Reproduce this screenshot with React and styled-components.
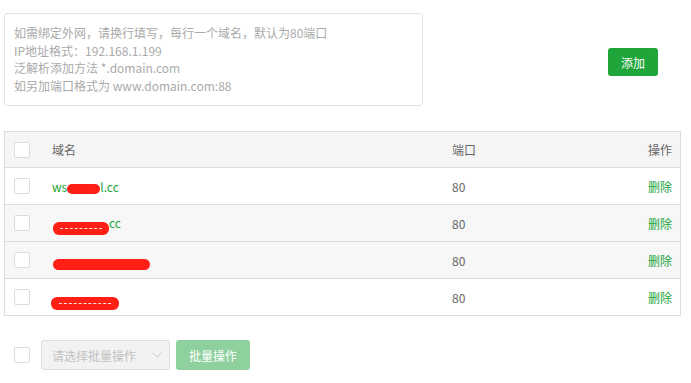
import React from "react";
import styled, { createGlobalStyle } from "styled-components";
import { ChevronDown } from "lucide-react";

const GlobalStyle = createGlobalStyle`
  body {
    margin: 0;
    background: #fff;
    font-family: "Noto Sans CJK SC", "Liberation Sans", sans-serif;
    font-size: 12px;
    color: #666;
  }
`;

const Page = styled.div`
  padding: 13px 10px 0 4px;
`;

const TopRow = styled.div`
  display: flex;
  align-items: center;
`;

const Textarea = styled.div`
  width: 419px;
  height: 93px;
  box-sizing: border-box;
  border: 1px solid #e2e2e2;
  border-radius: 3px;
  padding: 10px 9px;
  color: #aaa;
  font-size: 12px;
  line-height: 17.5px;
`;

const Button = styled.button`
  height: 28px;
  padding: 0 13px;
  border: none;
  border-radius: 3px;
  background: ${({ disabled }) => (disabled ? "#8fd19e" : "#20a53a")};
  color: #fff;
  font-family: inherit;
  font-size: 12px;
  cursor: pointer;
`;

const AddButton = styled(Button)`
  width: 50px;
  padding: 0;
  margin: 5px 23px 0 auto;
`;

const Table = styled.div`
  margin-top: 25px;
  border: 1px solid #ddd;
`;

const Row = styled.div`
  display: grid;
  grid-template-columns: 47px 400px 1fr 120px;
  align-items: center;
  height: ${({ $head }) => ($head ? "35px" : "36px")};
  background: ${({ $head, $shade }) => ($head ? "#f5f5f5" : $shade ? "#f7f7f7" : "#fff")};
  & + & {
    border-top: 1px solid #ddd;
  }
`;

const Check = styled.span`
  display: block;
  width: 14px;
  height: 14px;
  border: 1px solid #dcdcdc;
  border-radius: 2px;
  background: #fff;
  margin-left: 9px;
`;

const Cell = styled.div`
  text-align: ${({ $right }) => ($right ? "right" : "left")};
  padding-right: ${({ $right }) => ($right ? "8px" : "0")};
  color: ${({ $green }) => ($green ? "#20a53a" : "#666")};
`;

const Domain = styled.span`
  color: #20a53a;
  white-space: nowrap;
`;

const Redact = styled.span`
  display: inline-block;
  position: relative;
  vertical-align: middle;
  background: #ff1f14;
  border-radius: 6px;
  &::after {
    content: "";
    display: ${({ $dash }) => ($dash ? "block" : "none")};
    position: absolute;
    left: 12%;
    right: 12%;
    top: 50%;
    border-top: 1px dashed rgba(255, 255, 255, 0.85);
  }
`;

const Footer = styled.div`
  display: flex;
  align-items: center;
  gap: 6px;
  margin-top: 24px;
  padding-left: 1px;
`;

const FooterCheck = styled(Check)`
  margin: 0 5px 0 9px;
`;

const Select = styled.div`
  width: 129px;
  height: 30px;
  box-sizing: border-box;
  border: 1px solid #ddd;
  border-radius: 3px;
  background: #f2f2f2;
  color: #c2c2c2;
  display: flex;
  align-items: center;
  justify-content: space-between;
  padding: 0 4px 0 10px;
  font-size: 12px;
`;

const BatchButton = styled(Button)`
  height: 30px;
  width: 74px;
  padding: 0;
`;

const rows = [
  { pre: "ws", post: "l.cc", blob: { width: 33, height: 10, top: 1 } },
  { pre: "", post: "cc", shade: true, dash: true, blob: { width: 56, height: 13, top: 3, marginLeft: 1 } },
  { pre: "", post: "", shade: true, blob: { width: 97, height: 11, top: 2, marginLeft: 1 } },
  { pre: "", post: "", dash: true, blob: { width: 68, height: 13, top: 4, marginLeft: -1 } },
];

export default function App() {
  return (
    <>
      <GlobalStyle />
      <Page>
        <TopRow>
          <Textarea>
            如需绑定外网，请换行填写，每行一个域名，默认为80端口
            <br />
            IP地址格式：192.168.1.199
            <br />
            泛解析添加方法 *.domain.com
            <br />
            如另加端口格式为 www.domain.com:88
          </Textarea>
          <AddButton>添加</AddButton>
        </TopRow>

        <Table>
          <Row $head>
            <Check />
            <Cell>域名</Cell>
            <Cell>端口</Cell>
            <Cell $right>操作</Cell>
          </Row>
          {rows.map((r, i) => (
            <Row key={i} $shade={r.shade}>
              <Check />
              <Cell>
                <Domain>
                  {r.pre}
                  <Redact $dash={r.dash} style={r.blob} />
                  {r.post}
                </Domain>
              </Cell>
              <Cell>80</Cell>
              <Cell $right $green>删除</Cell>
            </Row>
          ))}
        </Table>

        <Footer>
          <FooterCheck />
          <Select>
            请选择批量操作
            <ChevronDown size={16} color="#c8c8c8" strokeWidth={1.5} />
          </Select>
          <BatchButton disabled>批量操作</BatchButton>
        </Footer>
      </Page>
    </>
  );
}
